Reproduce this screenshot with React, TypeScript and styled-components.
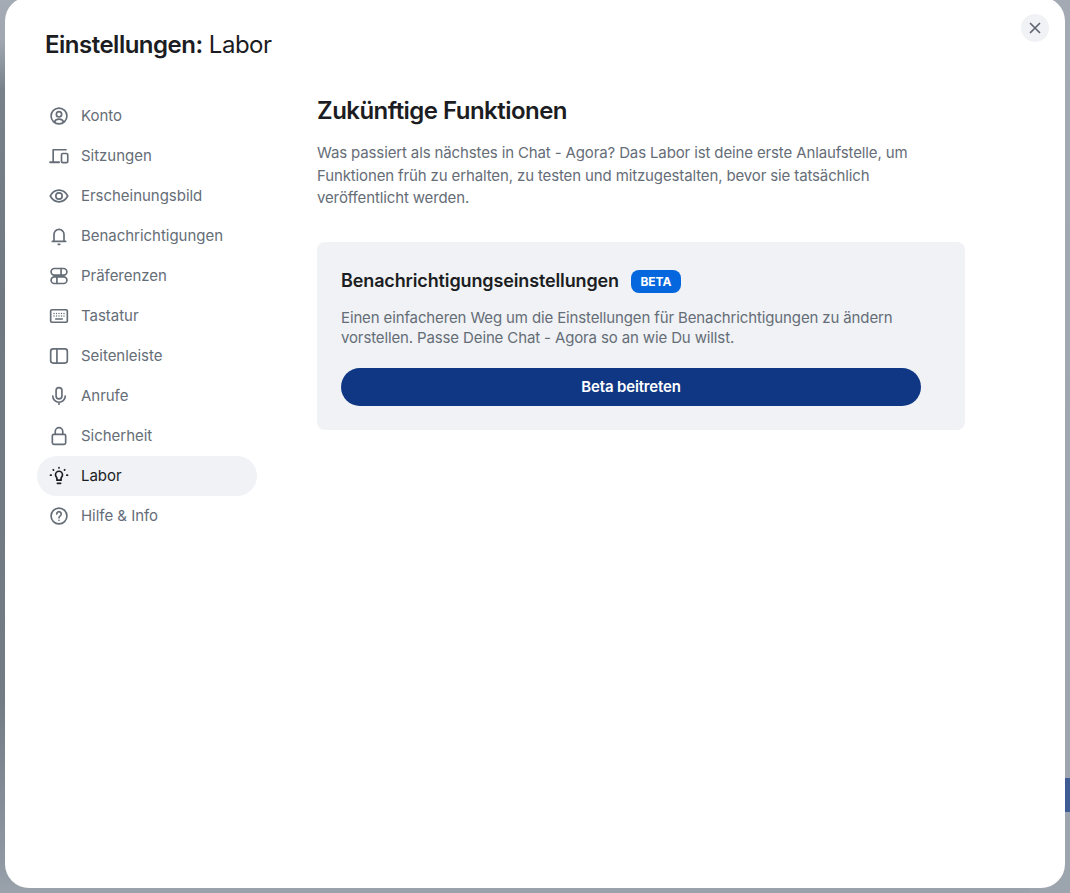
import { ReactNode } from "react";
import styled, { createGlobalStyle } from "styled-components";

const GlobalStyle = createGlobalStyle`
  html, body {
    margin: 0;
    padding: 0;
    height: 100%;
    overflow: hidden;
  }
  body {
    font-family: Inter, "Liberation Sans", sans-serif;
  }
`;

const Backdrop = styled.div`
  width: 1070px;
  height: 893px;
  box-sizing: border-box;
  padding: 0 5px 5px;
  display: flex;
  overflow: hidden;
  background:
    linear-gradient(#3f5c94, #3f5c94) right 0 top 778px / 5px 34px no-repeat,
    linear-gradient(#a3aab3, #9ca4ae) right 0 top 0 / 40px 100% no-repeat,
    linear-gradient(#a4abb4 0, #a0a7b0 40px, #78818a 90px, #6f7880 300px, #737c85 700px, #8f98a2 860px, #9aa2ac 100%) left 0 top 0 / 40px 100% no-repeat,
    #9aa2ac;
`;

const Modal = styled.div`
  flex: 1;
  margin-top: -3px;
  padding: 3px 16px 0 0;
  position: relative;
  background: #fff;
  border-radius: 24px;
  box-sizing: border-box;
  color: #1b1d22;
`;

const Title = styled.h1`
  margin: 0;
  padding: 30px 0 0 40px;
  font-size: 24px;
  line-height: 29px;
  font-weight: 400;
  letter-spacing: -0.5px;

  b {
    font-weight: 600;
  }
`;

const CloseButton = styled.button`
  position: absolute;
  top: 17px;
  right: 16px;
  width: 28px;
  height: 28px;
  padding: 0;
  border: 0;
  border-radius: 50%;
  background: #f0f2f5;
  color: #5f6672;
  display: flex;
  align-items: center;
  justify-content: center;
`;

const Body = styled.div`
  display: flex;
  margin-top: 22px;
`;

const Nav = styled.nav`
  width: 220px;
  margin: 15px 0 0 32px;
  display: flex;
  flex-direction: column;
  flex-shrink: 0;
`;

const NavItem = styled.div<{ $active?: boolean }>`
  height: 40px;
  display: flex;
  align-items: center;
  gap: 12px;
  padding-left: 12px;
  border-radius: 20px;
  font-size: 15px;
  letter-spacing: -0.03px;
  color: ${(props) => (props.$active ? "#1b1d22" : "#656d77")};
  background: ${(props) => (props.$active ? "#f0f2f5" : "transparent")};
`;

const NavLabel = styled.span`
  padding-bottom: 2px;
`;

const NavIcon = styled.svg`
  width: 20px;
  height: 20px;
  flex-shrink: 0;
  fill: none;
  stroke: currentColor;
  stroke-width: 2;
  stroke-linecap: round;
  stroke-linejoin: round;
`;

const Content = styled.main`
  margin-left: 60px;
  width: 648px;
`;

const Heading = styled.h2`
  margin: 0;
  padding-top: 15px;
  font-size: 24px;
  line-height: 29px;
  font-weight: 600;
  letter-spacing: -0.53px;
`;

const Intro = styled.p`
  margin: 16.9px 0 0;
  font-size: 15px;
  line-height: 22.75px;
  letter-spacing: -0.13px;
  color: #656d77;
`;

const Card = styled.section`
  margin-top: 31.9px;
  padding: 24px;
  background: #f0f2f5;
  border-radius: 8px;
`;

const CardHeader = styled.div`
  display: flex;
  align-items: center;
  gap: 12px;
  height: 30px;
`;

const CardTitle = styled.h3`
  margin: 0;
  font-size: 18px;
  line-height: 22px;
  font-weight: 600;
  letter-spacing: -0.13px;
`;

const Badge = styled.span`
  width: 50px;
  height: 23px;
  border-radius: 8px;
  background: #0467dd;
  color: #fff;
  font-size: 12px;
  font-weight: 700;
  display: flex;
  align-items: center;
  justify-content: center;
`;

const CardText = styled.p`
  margin: 11.6px 0 0;
  font-size: 15px;
  line-height: 20.5px;
  letter-spacing: -0.13px;
  color: #656d77;
`;

const JoinButton = styled.button`
  display: block;
  width: 580px;
  height: 38px;
  margin-top: 19.45px;
  padding: 0 0 2px;
  border: 0;
  border-radius: 19px;
  background: #0f3784;
  color: #fff;
  font-family: inherit;
  font-size: 15px;
  font-weight: 600;
  letter-spacing: -0.15px;
`;

interface NavEntry {
  label: string;
  icon: ReactNode;
  active?: boolean;
}

const entries: NavEntry[] = [
  {
    label: "Konto",
    icon: (
      <>
        <circle cx="12" cy="12" r="9.5" />
        <circle cx="12" cy="10" r="3.2" />
        <path d="M6.600 19c1-2.300 3-3.200 5.400-3.200s4.400.9 5.400 3.200" />
      </>
    ),
  },
  {
    label: "Sitzungen",
    icon: (
      <>
        <path d="M20.500 4.500H5v14" />
        <path d="M1.500 19.500h10.500" strokeWidth="2.600" />
        <rect x="15" y="9" width="7.500" height="11" rx="1.500" />
      </>
    ),
  },
  {
    label: "Erscheinungsbild",
    icon: (
      <>
        <path d="M1.500 12C4 7.500 7.600 5 12 5s8 2.500 10.500 7c-2.500 4.500-6.100 7-10.500 7s-8-2.500-10.500-7Z" />
        <circle cx="12" cy="12" r="3.800" />
      </>
    ),
  },
  {
    label: "Benachrichtigungen",
    icon: (
      <>
        <path d="M4 18.500h16M6 18.500V10a6 6 0 0 1 12 0v8.500" />
        <path d="M11 22h2" />
      </>
    ),
  },
  {
    label: "Präferenzen",
    icon: (
      <>
        <rect x="2.500" y="3" width="19" height="8" rx="4" />
        <rect x="2.500" y="13" width="19" height="8" rx="4" />
        <path d="M14.500 3v8M9.500 13v8" />
      </>
    ),
  },
  {
    label: "Tastatur",
    icon: (
      <>
        <rect x="2" y="4.500" width="20" height="15" rx="1.500" />
        <path d="M6 9h.01M9 9h.01M12 9h.01M15 9h.01M18 9h.01M6 12h.01M9 12h.01M12 12h.01M15 12h.01M18 12h.01M8 15.500h8" strokeWidth="1.700" />
      </>
    ),
  },
  {
    label: "Seitenleiste",
    icon: (
      <>
        <rect x="2" y="3.500" width="20" height="17" rx="3" />
        <path d="M9.500 3.500v17" />
      </>
    ),
  },
  {
    label: "Anrufe",
    icon: (
      <>
        <rect x="8.500" y="2" width="7" height="13.500" rx="3.500" />
        <path d="M4.500 12a7.500 7.500 0 0 0 15 0M12 19.500v2.500" />
      </>
    ),
  },
  {
    label: "Sicherheit",
    icon: (
      <>
        <rect x="4" y="10" width="16" height="12" rx="1.800" />
        <path d="M7.500 10V6.500a4.500 4.500 0 0 1 9 0V10" />
      </>
    ),
  },
  {
    label: "Labor",
    active: true,
    icon: (
      <>
        <path d="M9.500 17v-2.200c0-1-1.700-1.800-1.700-4.300a4.200 4.200 0 0 1 8.400 0c0 2.500-1.700 3.300-1.700 4.300V17Z" />
        <path d="M10 20.800h4" />
        <path d="M12 2v.5M5 4.500l.5.500M19 4.500l-.5.500M1.800 11h.8M21.400 11h.8" />
      </>
    ),
  },
  {
    label: "Hilfe & Info",
    icon: (
      <>
        <circle cx="12" cy="12" r="9.500" />
        <path d="M9.300 9.500a2.700 2.700 0 1 1 4.200 2.300c-1 .7-1.500 1.100-1.500 2.200" />
        <path d="M12 17.200h.01" />
      </>
    ),
  },
];

export default function App() {
  return (
    <Backdrop>
      <GlobalStyle />
      <Modal>
        <Title>
          <b>Einstellungen:</b> Labor
        </Title>
        <CloseButton aria-label="Schließen">
          <svg width="14" height="14" viewBox="0 0 14 14" fill="none" stroke="currentColor" strokeWidth="1.700" strokeLinecap="round">
            <path d="M2.500 2.500l9 9M11.500 2.500l-9 9" />
          </svg>
        </CloseButton>
        <Body>
          <Nav>
            {entries.map((entry) => (
              <NavItem key={entry.label} $active={entry.active}>
                <NavIcon viewBox="0 0 24 24">{entry.icon}</NavIcon>
                <NavLabel>{entry.label}</NavLabel>
              </NavItem>
            ))}
          </Nav>
          <Content>
            <Heading>Zukünftige Funktionen</Heading>
            <Intro>
              Was passiert als nächstes in Chat - Agora? Das Labor ist deine erste Anlaufstelle, um
              <br />
              Funktionen früh zu erhalten, zu testen und mitzugestalten, bevor sie tatsächlich
              <br />
              veröffentlicht werden.
            </Intro>
            <Card>
              <CardHeader>
                <CardTitle>Benachrichtigungseinstellungen</CardTitle>
                <Badge>BETA</Badge>
              </CardHeader>
              <CardText>
                Einen einfacheren Weg um die Einstellungen für Benachrichtigungen zu ändern
                <br />
                vorstellen. Passe Deine Chat - Agora so an wie Du willst.
              </CardText>
              <JoinButton>Beta beitreten</JoinButton>
            </Card>
          </Content>
        </Body>
      </Modal>
    </Backdrop>
  );
}
